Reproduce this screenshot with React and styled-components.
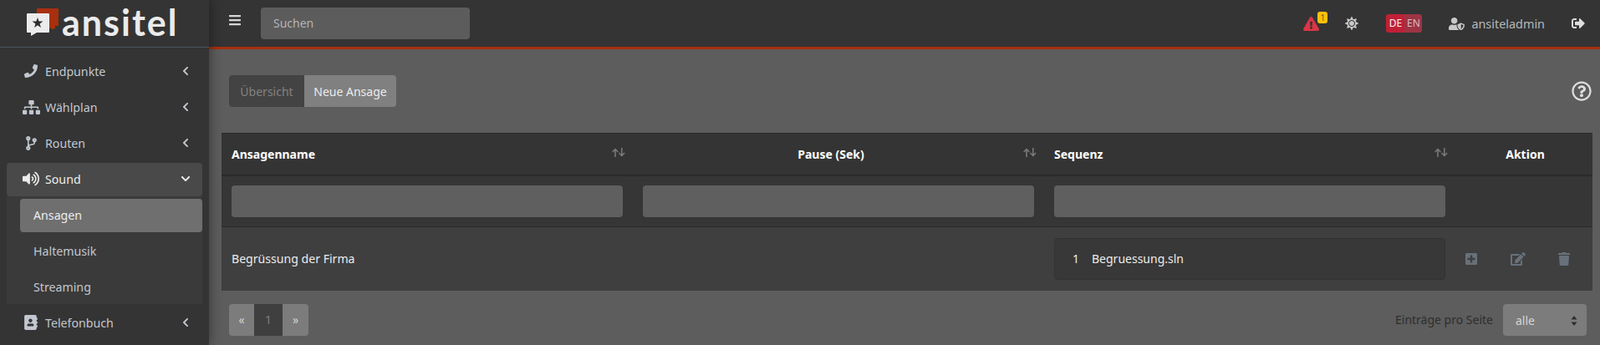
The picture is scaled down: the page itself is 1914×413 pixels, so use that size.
import React from 'react'
import styled, { createGlobalStyle } from 'styled-components'
import {
  FaPhone, FaSitemap, FaCodeBranch, FaVolumeUp, FaAddressBook, FaChevronLeft, FaChevronDown,
  FaBars, FaExclamationTriangle, FaSun, FaUserShield, FaSignOutAlt, FaRegQuestionCircle,
  FaPlusSquare, FaEdit, FaTrash,
} from 'react-icons/fa'

const FONT = '"Noto Sans", "Open Sans", sans-serif'

const Global = createGlobalStyle`
  html, body { margin: 0; padding: 0; height: 100%; overflow: hidden; background: #5d5d5d; }
  body { font-family: ${FONT}; font-size: 14px; color: #fff; }
  #root { height: 413px; }
  * { box-sizing: border-box; }
`

const Page = styled.div`
  display: flex;
  height: 413px;
  overflow: hidden;
`

const Sidebar = styled.aside`
  width: 250px;
  flex: none;
  background: #343434;
  position: relative;
  z-index: 2;
  box-shadow: 0 0 14px rgba(0, 0, 0, 0.45);
`

const Brand = styled.div`
  height: 57px;
  border-bottom: 1px solid #4b545c;
  display: flex;
  align-items: flex-start;
  padding: 10px 0 0 32px;
`

const Wordmark = styled.span`
  font-family: Lato, sans-serif;
  font-weight: 700;
  font-size: 43px;
  line-height: 52px;
  letter-spacing: 2px;
  color: #ebebeb;
  margin: -9px 0 0 4px;
`

const Nav = styled.nav`
  padding: 9px 8px 0;
`

const NavItem = styled.div`
  height: 40px;
  padding-bottom: 2px;
  margin-bottom: ${p => (p.$open ? '0' : '3px')};
  border-radius: 4px;
  background: ${p => (p.$open ? '#494949' : 'transparent')};
  color: ${p => (p.$open ? '#ececec' : '#c2c7d0')};
  display: flex;
  align-items: center;
  font-size: 14.2px;
`

const NavIcon = styled.span`
  width: 46px;
  padding-left: 18px;
  flex: none;
  display: flex;
  justify-content: center;
  font-size: ${p => p.$size || 18}px;
  padding-right: 6px;
`

const NavLabel = styled.span`
  flex: 1;
`

const Caret = styled.span`
  width: 12px;
  margin-right: 14px;
  display: flex;
  justify-content: center;
  font-size: 12px;
`

const SubMenu = styled.div`
  background: #3a3a3a;
  padding: 3px 0 0 16px;
  height: 129px;
  margin-bottom: 3px;
`

const SubItem = styled.div`
  height: 40px;
  padding-bottom: 2px;
  margin-bottom: 3px;
  padding-left: 16px;
  border-radius: 4px;
  display: flex;
  align-items: center;
  background: ${p => (p.$active ? '#6f6f6f' : 'transparent')};
  color: ${p => (p.$active ? '#ececec' : '#c2c7d0')};
  font-size: 14.2px;
`

const Main = styled.div`
  flex: 1;
  min-width: 0;
  display: flex;
  flex-direction: column;
`

const Topbar = styled.header`
  height: 59px;
  flex: none;
  background: #343434;
  border-bottom: 3px solid #a8300e;
  display: flex;
  align-items: center;
  padding: 0 18px 0 23px;
  color: #c8c8c8;
`

const Burger = styled.span`
  display: flex;
  font-size: 16px;
  color: #d6d6d6;
  margin: -8px 23px 0 0;
`

const Search = styled.input`
  width: 250px;
  height: 38px;
  border: 0;
  border-radius: 4px;
  background: #5c5c5c;
  color: #fff;
  font: 14px ${FONT};
  padding: 0 15px 2px;
  &::placeholder { color: #b4b4b4; opacity: 1; }
`

const TopRight = styled.div`
  margin-left: auto;
  display: flex;
  align-items: center;
`

const Alert = styled.span`
  position: relative;
  display: flex;
  font-size: 19px;
  color: #dc3545;
  margin-right: 31px;
`

const Badge = styled.span`
  position: absolute;
  top: -5px;
  left: 17px;
  width: 12px;
  height: 14px;
  border-radius: 3px;
  background: #ffc107;
  color: #6b5a17;
  font-size: 10px;
  line-height: 14px;
  text-align: center;
`

const Theme = styled.span`
  display: flex;
  font-size: 16px;
  color: #c8c8c8;
  margin-right: 33px;
`

const Lang = styled.div`
  display: flex;
  height: 22px;
  border-radius: 3px;
  overflow: hidden;
  font-size: 12px;
  line-height: 22px;
  margin-right: 32px;
`

const LangBtn = styled.span`
  width: ${p => (p.$active ? '22px' : '21px')};
  text-align: center;
  background: ${p => (p.$active ? '#c02035' : '#9c3444')};
  color: ${p => (p.$active ? '#f4f4f4' : '#dcbcc0')};
`

const UserIcon = styled.span`
  display: flex;
  font-size: 19px;
  color: #c8c8c8;
  margin-right: 8px;
`

const UserName = styled.span`
  color: #b8b8b8;
  font-size: 14.4px;
  margin-right: 32px;
`

const Logout = styled.span`
  display: flex;
  font-size: 16px;
  color: #dedede;
`

const Content = styled.main`
  flex: 1;
  background: #5d5d5d;
  padding: 31px 10px 0 15px;
`

const TabRow = styled.div`
  display: flex;
  align-items: center;
  justify-content: space-between;
  padding: 0 0 0 9px;
  margin-bottom: 31px;
`

const Tabs = styled.div`
  display: flex;
  height: 38px;
  border-radius: 4px;
  overflow: hidden;
`

const Tab = styled.span`
  display: flex;
  align-items: center;
  justify-content: center;
  width: ${p => (p.$active ? '110px' : '90px')};
  background: ${p => (p.$active ? '#808080' : '#434343')};
  color: ${p => (p.$active ? '#ececec' : '#828282')};
`

const Help = styled.span`
  display: flex;
  font-size: 24px;
  color: #dedede;
`

const Table = styled.table`
  width: 1640px;
  table-layout: fixed;
  border-collapse: collapse;
`

const HeadCell = styled.th`
  height: 50px;
  background: #343434;
  padding: 0 9px 0 12px;
  border-top: 1px solid #2a2a2a;
  border-bottom: 2px solid #2a2a2a;
  color: #fff;
  font-size: 14px;
  font-weight: 700;
  text-align: ${p => p.$align || 'left'};
`

const HeadInner = styled.div`
  display: flex;
  align-items: center;
`

const HeadLabel = styled.span`
  flex: 1;
  text-align: ${p => p.$align || 'left'};
  padding-right: ${p => (p.$align === 'center' ? '5px' : '0')};
`

const SortMark = styled.svg`
  flex: none;
  width: 16px;
  height: 11px;
  margin-top: -3px;
  fill: none;
  stroke: #7c7c7c;
  stroke-width: 1.5;
`

const FilterCell = styled.td`
  height: 62px;
  background: #363636;
  padding: 0 12px;
  border-bottom: 1px solid #2a2a2a;
`

const FilterInput = styled.input`
  display: block;
  width: 100%;
  height: 38px;
  border: 0;
  border-radius: 4px;
  background: #5f5f5f;
`

const Cell = styled.td`
  height: 76px;
  background: #3f3f3f;
  padding: 0 12px;
  color: #ececec;
  font-size: 14.1px;
`

const SeqBox = styled.div`
  height: 50px;
  display: flex;
  align-items: center;
  gap: 15px;
  padding: 0 16px 0 21px;
  background: #383838;
  border: 1px solid #333;
  border-radius: 4px;
  font-size: 14px;
`

const Actions = styled.div`
  display: flex;
  align-items: center;
  justify-content: space-between;
  padding: 0 13px 0 0;
  margin-left: -2px;
`

const ActionIcon = styled.span`
  display: flex;
  width: 18px;
  justify-content: center;
  font-size: ${p => p.$size || 16}px;
  color: #68717a;
`

const Footer = styled.div`
  display: flex;
  align-items: center;
  justify-content: space-between;
  padding: 16px 6px 0 9px;
`

const Pager = styled.div`
  display: flex;
  height: 38px;
  border-radius: 4px;
  overflow: hidden;
`

const PageBtn = styled.span`
  display: flex;
  align-items: center;
  justify-content: center;
  width: ${p => (p.$current ? '34px' : '30px')};
  background: ${p => (p.$current ? '#3f3f3f' : '#7c7c7c')};
  color: ${p => (p.$current ? '#7e7e7e' : '#d2d2d2')};
  &:last-child { width: 31px; }
`

const PageSize = styled.div`
  display: flex;
  align-items: center;
  gap: 12px;
  color: #2e2e2e;
`

const SelectBox = styled.div`
  width: 100px;
  height: 38px;
  border-radius: 4px;
  background: #7c7c7c;
  color: #d6d6d6;
  display: flex;
  align-items: center;
  justify-content: space-between;
  padding: 2px 11px 0 15px;
`

const rows = [
  { icon: <FaPhone />, label: 'Endpunkte', size: 16 },
  { icon: <FaSitemap />, label: 'Wählplan', size: 21 },
  { icon: <FaCodeBranch />, label: 'Routen', size: 17 },
]

const SortIcon = () => (
  <SortMark viewBox="0 0 16 11">
    <path d="M4 11V2M.7 5L4 1.6 7.3 5" />
    <path d="M11.8 0v9M8.5 6l3.3 3.4L15.1 6" />
  </SortMark>
)

const Logo = () => (
  <svg width="38" height="33" viewBox="0 0 38 33">
    <path d="M12 0h25a1 1 0 0 1 1 1v19a1 1 0 0 1-1 1h-3v3l-3 1-4-2V6H12z" fill="#a8300e" />
    <path d="M1 6h25a1 1 0 0 1 1 1v21a1 1 0 0 1-1 1H12l-7 4v-4H1a1 1 0 0 1-1-1V7a1 1 0 0 1 1-1z" fill="#ebebeb" />
    <path d="M13 11l1.6 4.5h4.9l-4 2.9 1.5 4.6-4-2.8-4 2.8 1.5-4.6-4-2.9h4.9z" fill="#2b2b2b" />
  </svg>
)

const App = () => {
  return (
    <Page>
      <Global />
      <Sidebar>
        <Brand>
          <Logo />
          <Wordmark>ansitel</Wordmark>
        </Brand>
        <Nav>
          {rows.map(r => (
            <NavItem key={r.label}>
              <NavIcon $size={r.size}>{r.icon}</NavIcon>
              <NavLabel>{r.label}</NavLabel>
              <Caret><FaChevronLeft /></Caret>
            </NavItem>
          ))}
          <NavItem $open>
            <NavIcon $size={20}><FaVolumeUp /></NavIcon>
            <NavLabel>Sound</NavLabel>
            <Caret><FaChevronDown /></Caret>
          </NavItem>
          <SubMenu>
            <SubItem $active>Ansagen</SubItem>
            <SubItem>Haltemusik</SubItem>
            <SubItem>Streaming</SubItem>
          </SubMenu>
          <NavItem>
            <NavIcon $size={18}><FaAddressBook /></NavIcon>
            <NavLabel>Telefonbuch</NavLabel>
            <Caret><FaChevronLeft /></Caret>
          </NavItem>
        </Nav>
      </Sidebar>
      <Main>
        <Topbar>
          <Burger><FaBars /></Burger>
          <Search placeholder="Suchen" />
          <TopRight>
            <Alert>
              <FaExclamationTriangle />
              <Badge>1</Badge>
            </Alert>
            <Theme><FaSun /></Theme>
            <Lang>
              <LangBtn $active>DE</LangBtn>
              <LangBtn>EN</LangBtn>
            </Lang>
            <UserIcon><FaUserShield /></UserIcon>
            <UserName>ansiteladmin</UserName>
            <Logout><FaSignOutAlt /></Logout>
          </TopRight>
        </Topbar>
        <Content>
          <TabRow>
            <Tabs>
              <Tab>Übersicht</Tab>
              <Tab $active>Neue Ansage</Tab>
            </Tabs>
            <Help><FaRegQuestionCircle /></Help>
          </TabRow>
          <Table>
            <colgroup>
              <col width="492" />
              <col width="492" />
              <col width="492" />
              <col width="164" />
            </colgroup>
            <thead>
              <tr>
                <HeadCell><HeadInner><HeadLabel>Ansagenname</HeadLabel><SortIcon /></HeadInner></HeadCell>
                <HeadCell><HeadInner><HeadLabel $align="center">Pause (Sek)</HeadLabel><SortIcon /></HeadInner></HeadCell>
                <HeadCell><HeadInner><HeadLabel>Sequenz</HeadLabel><SortIcon /></HeadInner></HeadCell>
                <HeadCell $align="center">Aktion</HeadCell>
              </tr>
              <tr>
                <FilterCell><FilterInput /></FilterCell>
                <FilterCell><FilterInput /></FilterCell>
                <FilterCell><FilterInput /></FilterCell>
                <FilterCell />
              </tr>
            </thead>
            <tbody>
              <tr>
                <Cell>Begrüssung der Firma</Cell>
                <Cell />
                <Cell>
                  <SeqBox><span>1</span><span>Begruessung.sln</span></SeqBox>
                </Cell>
                <Cell>
                  <Actions>
                    <ActionIcon><FaPlusSquare /></ActionIcon>
                    <ActionIcon $size={18}><FaEdit /></ActionIcon>
                    <ActionIcon><FaTrash /></ActionIcon>
                  </Actions>
                </Cell>
              </tr>
            </tbody>
          </Table>
          <Footer>
            <Pager>
              <PageBtn>«</PageBtn>
              <PageBtn $current>1</PageBtn>
              <PageBtn>»</PageBtn>
            </Pager>
            <PageSize>
              Einträge pro Seite
              <SelectBox>
                alle
                <svg width="8" height="12" viewBox="0 0 8 12"><path d="M4 0l3.5 4.5h-7zM4 12L.5 7.5h7z" fill="#2e2e2e" /></svg>
              </SelectBox>
            </PageSize>
          </Footer>
        </Content>
      </Main>
    </Page>
  )
}

export default App
